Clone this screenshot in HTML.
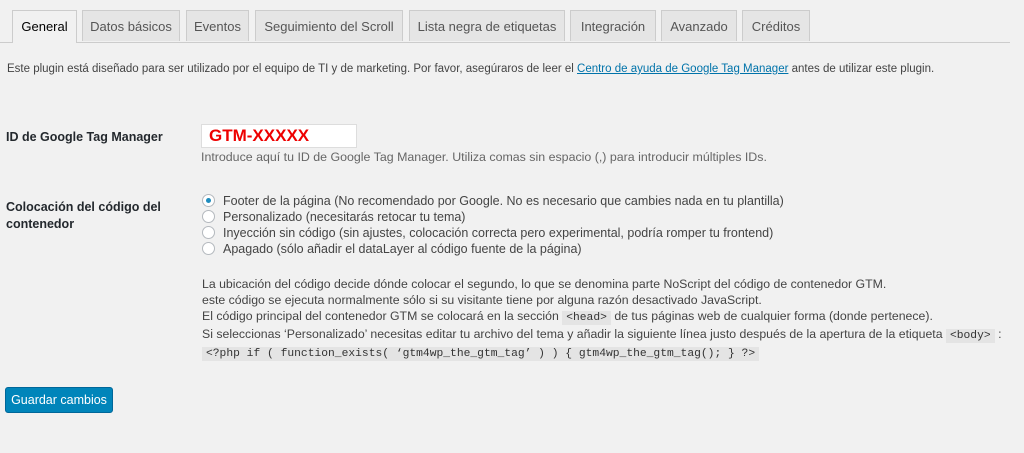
<!DOCTYPE html>
<html><head><meta charset="utf-8"><style>
body{margin:0;width:1024px;height:453px;background:#f1f1f1;font-family:"Liberation Sans",sans-serif;font-size:12.3px;color:#444;position:relative;overflow:hidden}
.a{position:absolute;white-space:nowrap}
.tabs{position:absolute;left:0;top:42px;width:1010px;border-top:1px solid #ccc}
.tab{position:absolute;top:10px;height:31px;border:1px solid #ccc;border-bottom:none;background:#e5e5e5;color:#555;font-size:13px;line-height:31px;text-align:center;box-sizing:border-box}
.tab.on{background:#f1f1f1;color:#000;height:33px}
code{font-family:"Liberation Mono",monospace;background:#e4e4e4;padding:1px 4px;font-size:11.3px;color:#333}
.r{position:absolute;left:202px;width:13px;height:13px;border:1px solid #b4b9be;border-radius:50%;background:#fff;box-sizing:border-box}
</style></head><body>
<div class="tabs"></div>
<div class="tab on" style="left:12px;width:65px">General</div>
<div class="tab" style="left:82px;width:98px">Datos básicos</div>
<div class="tab" style="left:186px;width:63px">Eventos</div>
<div class="tab" style="left:255px;width:148px">Seguimiento del Scroll</div>
<div class="tab" style="left:409px;width:156px">Lista negra de etiquetas</div>
<div class="tab" style="left:570px;width:86px">Integración</div>
<div class="tab" style="left:661px;width:76px">Avanzado</div>
<div class="tab" style="left:742px;width:68px">Créditos</div>

<div class="a" style="left:7px;top:63px;font-size:11.5px">Este plugin está diseñado para ser utilizado por el equipo de TI y de marketing. Por favor, asegúraros de leer el <span style="color:#0073aa;text-decoration:underline">Centro de ayuda de Google Tag Manager</span> antes de utilizar este plugin.</div>

<div class="a" style="left:6px;top:130px;font-weight:bold;color:#23282d;font-size:12.5px">ID de Google Tag Manager</div>
<div class="a" style="left:201px;top:124px;width:156px;height:24px;background:#fff;border:1px solid #ddd;box-sizing:border-box;color:#e00;font-weight:bold;font-size:17px;line-height:22px;padding-left:7px">GTM-XXXXX</div>
<div class="a" style="left:201px;top:150px;color:#666;font-size:12.4px">Introduce aquí tu ID de Google Tag Manager. Utiliza comas sin espacio (,) para introducir múltiples IDs.</div>

<div class="a" style="left:6px;top:199px;font-weight:bold;color:#23282d;font-size:12.5px;line-height:17px">Colocación del código del<br>contenedor</div>

<div class="r" style="top:194px"><div style="width:5px;height:5px;background:#1e8cbe;border-radius:50%;margin:3px"></div></div>
<div class="r" style="top:210px"></div>
<div class="r" style="top:226px"></div>
<div class="r" style="top:242px"></div>
<div class="a" style="left:223px;top:193px;line-height:16px;font-size:12.5px">Footer de la página (No recomendado por Google. No es necesario que cambies nada en tu plantilla)<br>Personalizado (necesitarás retocar tu tema)<br>Inyección sin código (sin ajustes, colocación correcta pero experimental, podría romper tu frontend)<br>Apagado (sólo añadir el dataLayer al código fuente de la página)</div>

<div class="a" style="left:202px;top:276px;line-height:16px">La ubicación del código decide dónde colocar el segundo, lo que se denomina parte NoScript del código de contenedor GTM.<br>este código se ejecuta normalmente sólo si su visitante tiene por alguna razón desactivado JavaScript.<br>El código principal del contenedor GTM se colocará en la sección <code>&lt;head&gt;</code> de tus páginas web de cualquier forma (donde pertenece).<br>Si seleccionas ‘Personalizado’ necesitas editar tu archivo del tema y añadir la siguiente línea justo después de la apertura de la etiqueta <code>&lt;body&gt;</code> :<br><code>&lt;?php if ( function_exists( ‘gtm4wp_the_gtm_tag’ ) ) { gtm4wp_the_gtm_tag(); } ?&gt;</code></div>

<div class="a" style="left:5px;top:387px;width:108px;height:26px;background:#0085ba;border:1px solid #006799;border-radius:3px;box-sizing:border-box;color:#fff;text-align:center;line-height:24px;font-size:12.5px">Guardar cambios</div>
</body></html>
